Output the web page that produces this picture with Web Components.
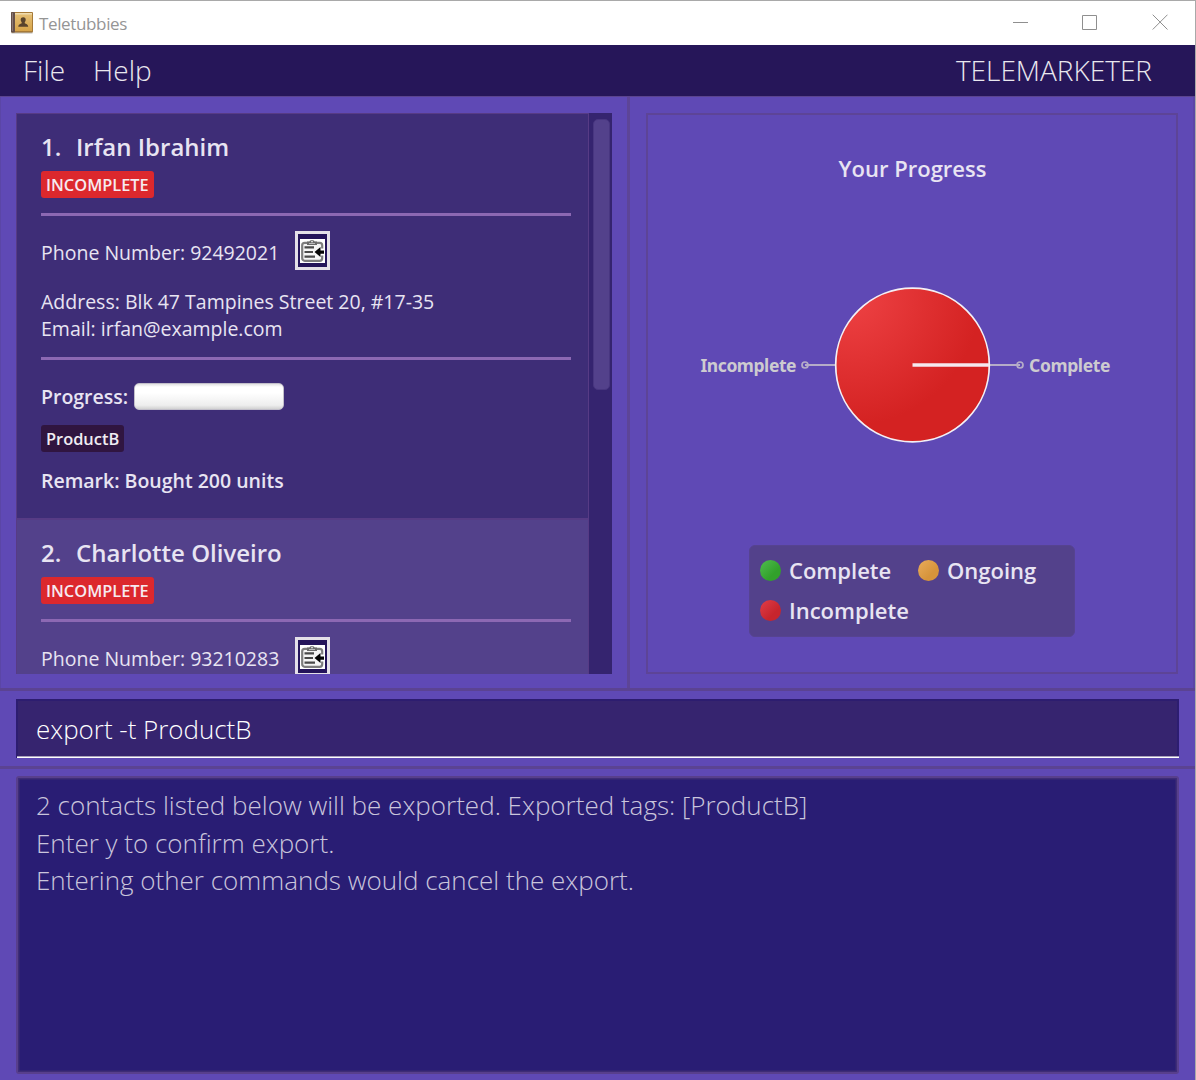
<!DOCTYPE html>
<html lang="en">
<head>
<meta charset="utf-8">
<title>Teletubbies</title>
<style>
html,body{margin:0;height:100%;overflow:hidden}
body{font-family:"Open Sans",sans-serif;color:#e8e4f2;width:1196px;height:1080px}
</style>
</head>
<body>
<tele-app></tele-app>
<script>
const define = (name, html, setup) => customElements.define(name, class extends HTMLElement {
  constructor() {
    super();
    const t = document.createElement('template');
    t.innerHTML = html;
    this.attachShadow({mode: 'open'}).append(t.content.cloneNode(true));
  }
  connectedCallback() { if (setup) setup(this, this.shadowRoot); }
});

define('window-bar', `<style>
:host{display:flex;height:44px;background:#fff;border-top:1px solid #a9a9a9;align-items:center;box-sizing:content-box;color:#959595}
.ico{margin:0 0 0 11px}
.t{font-size:17px;margin:2px auto 0 6px;white-space:nowrap;line-height:24px}
.t span{display:block;letter-spacing:-.36px}
.b{margin-right:27px;margin-top:-3px}
svg{display:block}
</style>
<svg class="ico" width="22" height="22" viewBox="0 0 22 22">
<defs><linearGradient id="g" x2="0" y2="1"><stop stop-color="#e5c078"/><stop offset="1" stop-color="#d7a449"/></linearGradient></defs>
<rect x=".5" y="20" width="21" height="1.5" fill="#bbb"/>
<rect width="22" height="20.5" rx="1" fill="#a67a38"/><rect x="4" y="1" width="17" height="18" fill="url(#g)"/>
<rect x="4" y="1" width="17" height="1.500" fill="#f0dcae"/>
<rect width="4" height="20.5" rx="1" fill="#65504a"/><rect x="1" y="1" width="1" height="18" fill="#8b7873"/>
<path d="M12.2 5.300c1.800 0 2.700 1.200 2.500 2.700-.2 1.400-1 2-1 2.900 0 .8 3.500.8 3.500 3.800H7.300c0-3 3.500-3 3.500-3.800 0-.9-.9-1.500-1.100-2.900-.2-1.500.700-2.700 2.500-2.700z" fill="#59432c"/>
</svg>
<div class="t"><span>Teletubbies</span></div>
<svg class="b" width="155" height="16" viewBox="0 0 155 16" fill="none" stroke="#8f8f8f">
<path d="M0 8.500h15M69.500 1.500h14v14h-14zM139.700.700l14.800 14.800M154.500.700l-14.800 14.800"/></svg>`);

define('menu-bar', `<style>
:host{display:flex;height:51px;background:#261659;align-items:center;font-size:28px;font-weight:300;color:#e9e7ee;padding:0 43px 2px 23px;box-sizing:border-box;line-height:38px}
.role{margin-left:auto}::slotted(*){white-space:nowrap}
.items{display:flex;gap:28px}
</style><div class="items"><slot></slot></div><div class="role"><slot name="role"></slot></div>`);

define('copy-button', `<style>
:host{display:block;width:35px;height:39px;box-sizing:border-box;border:3px solid #e4e0e8;background:#24145a;padding:5px 2px 0 2px}
svg{display:block}
</style><svg width="25" height="24" viewBox="0 0 25 24"><rect width="25" height="24" fill="#fff"/>
<rect x="2.200" y="3.800" width="20" height="18" rx="2.500" fill="#f6f6f6" stroke="#7d7d7d" stroke-width="2.200"/>
<path d="M7 2.500h2.500c.5-2 4.500-2 5 0H17v3.500H7z" fill="#6c6c6c"/><path d="M9 4.500h6" stroke="#bbb"/><circle cx="12" cy="2.600" r="1" fill="#ddd"/>
<path d="M4.500 8.300h9.500M4.500 13h8.500M4.500 17.600h10.500" stroke="#4a4a4a" stroke-width="2.200"/>
<path d="M20 9.500v7h5v-7z" fill="#fff"/>
<path d="M14.500 13l6-5v3.500H24v3.200h-3.500V18z" fill="#050505"/></svg>`);

define('status-badge', `<style>
:host{display:block;width:max-content;box-sizing:border-box;height:27px;line-height:28px;padding:0 5px;border-radius:3px;background:#dc282d;color:#f6eaf0;font-size:16.400px;font-weight:600;white-space:nowrap}
:host([kind=tag]){background:#301540;color:#f0ecf2}
</style><slot></slot>`);

define('contact-card', `<style>
:host{display:flex;flex-direction:column;height:406px;flex:none;box-sizing:border-box;border:1px solid #573b85;padding:16px 17px 0 24px;background:#3e2d77;font-size:19.500px;line-height:27px;white-space:nowrap}
:host([alt]){background:#53418b}
.name{font-size:24px;font-weight:600;line-height:33px;display:flex;height:33px}
.name i{font-style:normal;width:35px}
status-badge{margin-top:8px}
hr{border:0;height:3px;background:#8c68b3;margin:15px 0;width:100%;flex:none}
.phone{display:flex;height:39px;margin-bottom:18px;align-items:center}
.phone span{margin-top:4px;width:254px}
.progress{display:flex;margin-top:8px;font-weight:600;height:27px}
.bar{width:150px;height:27px;box-sizing:border-box;border:1px solid #c2bfca;border-radius:5px;background:linear-gradient(#e2e2e2,#fff 12%,#fff 35%,#eee 85%,#d2d2d2)}
.progress span{width:93px}
.remark{font-weight:600;margin-top:15px}
.tag{margin-top:15px}
</style>
<div class="name"><i id="n"></i><span id="name"></span></div>
<status-badge>INCOMPLETE</status-badge><hr>
<div class="phone"><span id="phone"></span><copy-button></copy-button></div>
<div id="addr"></div><div id="mail"></div><hr>
<div class="progress"><span>Progress:</span><div class="bar"></div></div>
<status-badge class="tag" kind="tag">ProductB</status-badge>
<div class="remark" id="remark"></div>`, (el, r) => {
  const put = (id, v) => r.getElementById(id).textContent = v;
  put('n', el.getAttribute('index') + '.');
  put('name', el.getAttribute('name'));
  put('phone', 'Phone Number: ' + el.getAttribute('phone'));
  if (el.hasAttribute('address')) {
    put('addr', 'Address: ' + el.getAttribute('address'));
    put('mail', 'Email: ' + el.getAttribute('email'));
    put('remark', 'Remark: ' + el.getAttribute('remark'));
  } else {
    while (r.querySelector('.phone').nextSibling) r.querySelector('.phone').nextSibling.remove();
  }
});

define('contact-list', `<style>
:host{display:flex;height:561px;width:596px;overflow:hidden}
.cells{display:flex;flex-direction:column;width:573px;overflow:hidden}
.track{width:23px;background:#35246f;padding:6px 2px 0 4px;box-sizing:border-box}
.thumb{height:271px;background:#53418b;border:1px solid #483680;border-radius:5px;box-sizing:border-box}
</style><div class="cells"><slot></slot></div><div class="track"><div class="thumb"></div></div>`);

define('progress-chart', `<style>
:host{display:flex;flex-direction:column;align-items:center;width:532px;height:561px;box-sizing:border-box;border:2px solid #5d4497;}
h2{font-size:22px;font-weight:600;line-height:30px;margin:38px 0 0 1px}
svg{display:block}
.pie{margin-top:74px}
.legend{margin-top:100px;width:326px;height:92px;box-sizing:border-box;border:1px solid #564390;border-radius:6px;background:#53418b;display:grid;grid-template-columns:158px 1fr;grid-template-rows:40px 40px;padding:4px 9px 4px 10px;font-size:22px;font-weight:600}
.legend div{display:flex;align-items:center;gap:8px;white-space:nowrap}
b{width:21px;height:21px;border-radius:50%}
</style>
<h2>Your Progress</h2>
<svg class="pie" width="440" height="188" viewBox="692 257 440 188">
<defs><radialGradient id="p" gradientUnits="userSpaceOnUse" cx="850" cy="295" r="145"><stop offset=".12" stop-color="#eb3e40"/><stop offset=".9" stop-color="#d42222"/></radialGradient></defs>
<path d="M805 365h31M989 365h31" stroke="#b5acc8" stroke-width="2"/>
<circle cx="805" cy="365" r="3" fill="none" stroke="#b5acc8" stroke-width="1.700"/><circle cx="1020" cy="365" r="3" fill="none" stroke="#b5acc8" stroke-width="1.700"/>
<circle cx="912.500" cy="365" r="76.800" fill="url(#p)" stroke="#f4f0f5" stroke-width="1.700"/>
<path d="M912.500 365h76.500" stroke="#f5e9ef" stroke-width="3.300"/>
<g font-family="Noto Sans" font-weight="700" font-size="17.500" fill="#cdcbd0"><text x="700.500" y="372" textLength="96">Incomplete</text><text x="1029" y="372" textLength="81.500">Complete</text></g>
</svg>
<div class="legend">
<div><b style="background:linear-gradient(135deg,#50bd50,#32a12b 65%)"></b>Complete</div>
<div><b style="background:linear-gradient(135deg,#eaac5b,#d6943b 65%)"></b>Ongoing</div>
<div><b style="background:linear-gradient(135deg,#e13d49,#c7252d 65%)"></b>Incomplete</div>
</div>`);

define('command-box', `<style>
:host{display:block;height:59px;box-sizing:border-box;background:#36246f;border:solid #2d1d70;border-width:2px 2px 0;padding:10px 18px 0;font-size:25.950px;font-weight:300;line-height:36px;color:#fff;white-space:nowrap}
.u{height:2px;background:linear-gradient(#a9a1bd 50%,#fff 50%);margin:9px -20px 0 -19px}
</style><slot></slot><div class="u"></div>`);

define('result-display', `<style>
:host{display:block;height:298px;box-sizing:border-box;background:#291d74;border:2px solid #583f8d;outline:0;padding:9px 18px;font-size:26px;font-weight:300;line-height:37.500px;color:#cac5dc;white-space:pre;box-shadow:inset 0 0 0 1.500px #3e2d77;border-radius:3px}
</style><slot></slot>`);

define('tele-app', `<style>
:host{display:flex;flex-direction:column;width:1196px;height:1080px;box-sizing:border-box;border-right:1px solid #a9a9a9;background:#5f49b5}
.split{display:flex;height:595px;box-sizing:border-box;border-top:1px solid #5b448f;border-bottom:3px solid #5b4392}
.left{width:630px;box-sizing:border-box;border-right:3px solid #5d4597;border-left:1px solid #5b46a6;padding:16px 0 0 15px}
.right{flex:1;padding:16px 0 0 16px;border-right:2px solid #5b46a6}
.cmd{height:78px;box-sizing:border-box;padding:8px 16px 0;border-bottom:3px solid #5b4392}
.res{padding:7px 16px 0}
</style>
<window-bar></window-bar>
<menu-bar><span>File</span><span>Help</span><span slot="role">TELEMARKETER</span></menu-bar>
<div class="split"><div class="left"><contact-list>
<contact-card index="1" name="Irfan Ibrahim" phone="92492021" address="Blk 47 Tampines Street 20, #17-35" email="irfan@example.com" remark="Bought 200 units"></contact-card>
<contact-card alt index="2" name="Charlotte Oliveiro" phone="93210283"></contact-card>
</contact-list></div><div class="right"><progress-chart></progress-chart></div></div>
<div class="cmd"><command-box>export -t ProductB</command-box></div>
<div class="res"><result-display>2 contacts listed below will be exported. Exported tags: [ProductB]
Enter y to confirm export.
Entering other commands would cancel the export.</result-display></div>`);
</script>
</body>
</html>
